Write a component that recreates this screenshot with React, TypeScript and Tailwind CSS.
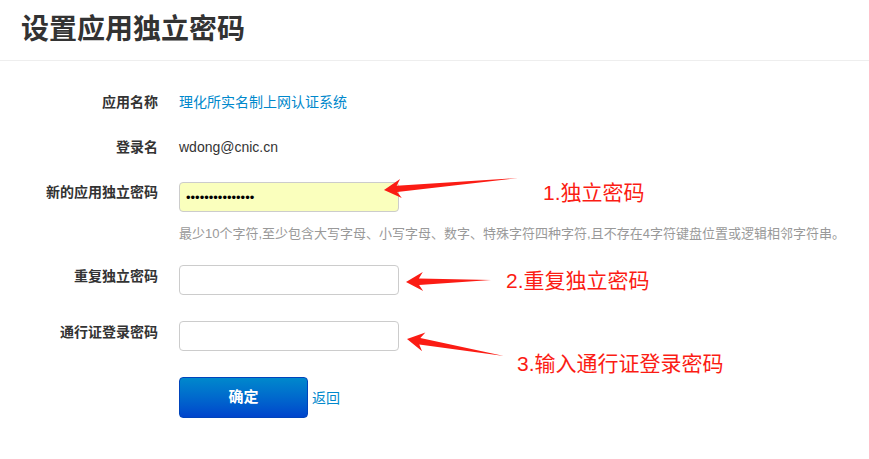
import React from 'react';

const font = { fontFamily: '"Liberation Sans", "Noto Sans CJK SC", sans-serif' };

// red annotation arrow: tail -> tip
function arrowPoints(tail: [number, number], tip: [number, number]) {
  const dx = tail[0] - tip[0];
  const dy = tail[1] - tip[1];
  const len = Math.hypot(dx, dy);
  const ux = dx / len;
  const uy = dy / len;
  const nx = -uy;
  const ny = ux;
  const p = (a: number, b: number) => `${tip[0] + ux * a + nx * b},${tip[1] + uy * a + ny * b}`;
  return [p(0, 0), p(17, 9.5), p(13, 3.2), `${tail[0]},${tail[1]}`, p(13, -3.2), p(17, -9.5)].join(' ');
}

function Arrows() {
  return (
    <svg className="pointer-events-none absolute left-0 top-0" width="869" height="459">
      <polygon points={arrowPoints([518, 178], [384, 190])} fill="#fb1c14" />
      <polygon points={arrowPoints([491, 280], [406, 282])} fill="#fb1c14" />
      <polygon points={arrowPoints([504, 356], [407, 339])} fill="#fb1c14" />
    </svg>
  );
}

function Row({ label, children, labelPad = '' }: { label: string; children: React.ReactNode; labelPad?: string }) {
  return (
    <div className="flex items-start leading-[20px]">
      <div className={`w-[158px] text-right text-[14px] leading-[20px] font-bold text-[#333] ${labelPad}`}>{label}</div>
      <div className="ml-[21px] leading-[20px]">{children}</div>
    </div>
  );
}

export default function App() {
  return (
    <div className="relative h-[459px] w-[869px] overflow-hidden bg-white" style={font}>
      {/* Header */}
      <div className="flex h-[61px] items-center border-b border-[#eeeeee] pl-[21px]">
        <h1 className="text-[28px] font-bold leading-none text-[#333]">设置应用独立密码</h1>
      </div>

      {/* Form */}
      <div className="pt-[31px]">
        <Row label="应用名称">
          <a className="text-[14px] leading-[20px] text-[#0088cc]">理化所实名制上网认证系统</a>
        </Row>

        <div className="mt-[25px]">
          <Row label="登录名">
            <span className="text-[14px] leading-[20px] text-[#333]">wdong@cnic.cn</span>
          </Row>
        </div>

        <div className="mt-[25px]">
          <Row label="新的应用独立密码">
            <input
              type="password"
              readOnly
              defaultValue="abcdefghijklmno"
              className="block h-[30px] w-[220px] rounded-[4px] border border-[#cccccc] bg-[#faffbd] px-[6px] text-[13px] text-black outline-none"
            />
          </Row>
        </div>

        <div className="mt-[13px] pl-[179px] text-[13px] leading-[18px] text-[#999]">
          最少10个字符,至少包含大写字母、小写字母、数字、特殊字符四种字符,且不存在4字符键盘位置或逻辑相邻字符串。
        </div>

        <div className="mt-[22px]">
          <Row label="重复独立密码" labelPad="pt-px">
            <input
              type="password"
              className="block h-[30px] w-[220px] rounded-[4px] border border-[#cccccc] bg-white px-[6px] text-[13px] outline-none"
            />
          </Row>
        </div>

        <div className="mt-[26px]">
          <Row label="通行证登录密码" labelPad="pt-px">
            <input
              type="password"
              className="block h-[30px] w-[220px] rounded-[4px] border border-[#cccccc] bg-white px-[6px] text-[13px] outline-none"
            />
          </Row>
        </div>

        <div className="mt-[26px] flex items-center pl-[179px]">
          <button className="h-[41px] w-[129px] rounded-[4px] border border-[#0044bb] bg-gradient-to-b from-[#0088cc] to-[#0044cc] text-[15px] font-bold text-white">
            确定
          </button>
          <a className="ml-[4px] text-[14px] leading-[20px] text-[#0088cc]">返回</a>
        </div>
      </div>

      {/* Annotations */}
      <Arrows />
      <div className="absolute left-[543px] top-[180px] text-[21px] leading-[26px] text-[#fb1c14]">1.独立密码</div>
      <div className="absolute left-[506px] top-[268px] text-[21px] leading-[26px] text-[#fb1c14]">2.重复独立密码</div>
      <div className="absolute left-[517px] top-[351px] text-[21px] leading-[26px] text-[#fb1c14]">3.输入通行证登录密码</div>
    </div>
  );
}
